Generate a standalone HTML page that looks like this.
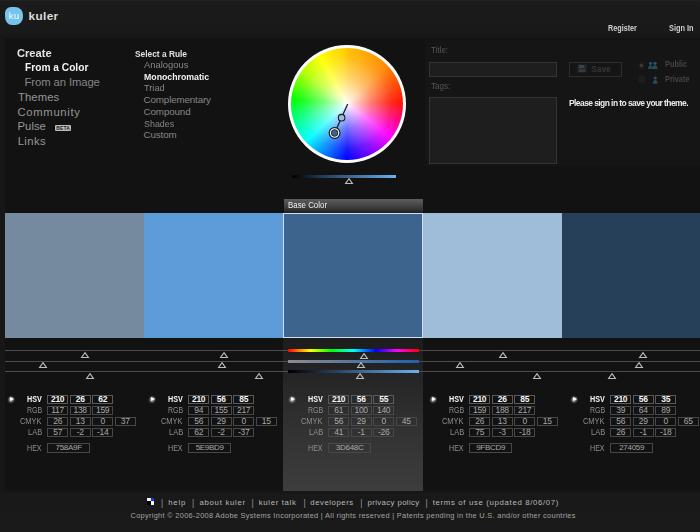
<!DOCTYPE html><html><head><meta charset='utf-8'><style>
html,body{margin:0;padding:0;}
body{width:700px;height:532px;overflow:hidden;position:relative;background:#121212;font-family:'Liberation Sans',sans-serif;}
.a{position:absolute;}
.t{position:absolute;white-space:nowrap;}
.box{position:absolute;border:1px solid #474747;box-sizing:border-box;height:9px;width:21px;text-align:center;font-size:8.5px;line-height:7px;color:#a8a8a8;letter-spacing:-0.3px;text-indent:0.3px;white-space:nowrap;}
.box.b{color:#f4f4f4;font-weight:700;border-color:#5a5a5a;}
.lbl{position:absolute;text-align:right;width:40px;font-size:8.5px;line-height:9px;color:#8c8c8c;white-space:nowrap;}
.lbl.b{color:#f4f4f4;font-weight:700;}
.tri{position:absolute;width:0;height:0;}
</style></head><body>

<div class='a' style='left:0;top:0;width:700px;height:38px;background:linear-gradient(#242424 0,#1b1b1b 2px,#191919 85%,#161616 100%)'></div>
<div class='a' style='left:0;top:38px;width:5px;height:453px;background:#171717'></div>
<div class='a' style='left:425px;top:40px;width:275px;height:126px;background:#151515'></div>
<div class='a' style='left:0;top:491px;width:700px;height:41px;background:linear-gradient(#161616,#191919 4px,#1a1a1a)'></div>
<div class='a' style='left:5px;top:7px;width:17.6px;height:18.2px;background:#76c4ec;border-radius:6px 8px 8px 7px / 6px 8px 8px 8px'></div>
<div class='a' style='left:55px;top:125px;width:15.5px;height:6px;background:#bdbdbd;border-radius:1px'></div>
<div class='t' style='left:56.3px;top:125.3px;font-size:5px;line-height:6px;font-weight:700;color:#222;letter-spacing:0.1px'>BETA</div>
<div class='a' style='left:288px;top:45px;width:118px;height:118px;border-radius:50%;background:#fff'></div>
<div class='a' style='left:291px;top:48px;width:112px;height:112px;border-radius:50%;background:conic-gradient(from 0deg,#ffc000 0deg,#ff8a00 45deg,#ff1000 88deg,#ff0080 108deg,#ff00ff 127deg,#8000ff 152deg,#0000ff 180deg,#0080ff 205deg,#00ffff 228deg,#00ff60 260deg,#00ff00 275deg,#aaff00 305deg,#ffff00 330deg,#ffc800 360deg)'></div>
<div class='a' style='left:291px;top:48px;width:112px;height:112px;border-radius:50%;background:radial-gradient(circle closest-side,rgba(255,255,255,1) 0%,rgba(255,255,255,0.82) 12%,rgba(255,255,255,0.42) 45%,rgba(255,255,255,0.1) 80%,rgba(255,255,255,0) 100%)'></div>
<svg class='a' style='left:0;top:0' width='700' height='200'>
<line x1='347.7' y1='104' x2='334.6' y2='133' stroke='#202020' stroke-width='1.3'/>
<circle cx='341.6' cy='117.7' r='3.3' fill='#9fbcd9' stroke='#1a1a1a' stroke-width='1.1'/>
<circle cx='334.6' cy='133' r='5.3' fill='#3d648c' stroke='#151515' stroke-width='1.3'/>
<circle cx='334.6' cy='133' r='4.1' fill='none' stroke='#f4ead8' stroke-width='1.4'/>
<circle cx='334.6' cy='133' r='3.2' fill='#3d648c' stroke='#151515' stroke-width='0.6'/>
</svg>
<div class='a' style='left:292px;top:175px;width:104px;height:3px;background:linear-gradient(90deg,#000 0%,#1d3550 25%,#3d6590 55%,#6cb0f0 100%)'></div>
<svg class='a' style='left:344.00px;top:177.00px' width='10' height='8'><path d='M5.00 1.6 L8.40 6.50 L1.6 6.50 Z' fill='none' stroke='#bdbdbd' stroke-width='1.1' stroke-linejoin='miter'/></svg>
<div class='a' style='left:429px;top:62px;width:128px;height:15px;box-sizing:border-box;border:1px solid #343434;background:#1e1e1e'></div>
<div class='a' style='left:429px;top:97px;width:128px;height:67px;box-sizing:border-box;border:1px solid #343434;background:#1e1e1e'></div>
<div class='a' style='left:569px;top:62px;width:53px;height:15px;box-sizing:border-box;border:1px solid #2c2c2c;'></div>
<svg class='a' style='left:577px;top:64px' width='10' height='9'><rect x='0.5' y='0.5' width='9' height='8' fill='#222a30'/><rect x='2' y='1' width='5' height='3' fill='#39434a'/><rect x='2' y='5.5' width='6' height='2.5' fill='#3a3a3a'/></svg>
<div class='a' style='left:637.5px;top:61.5px;width:7.5px;height:7.5px;border-radius:50%;background:#1d1d1d'></div>
<div class='a' style='left:640px;top:64px;width:2.5px;height:2.5px;border-radius:50%;background:#3c3c3c'></div>
<div class='a' style='left:637.5px;top:75px;width:8px;height:8px;border-radius:50%;background:#1d1d1d'></div>
<svg class='a' style='left:647px;top:61px' width='12' height='9'>
<circle cx='3.5' cy='2.3' r='1.6' fill='#235262'/><path d='M1 8 Q1 4.3 3.5 4.3 Q6 4.3 6 8 Z' fill='#1c4a5a'/>
<circle cx='8' cy='2.3' r='1.6' fill='#2c5564'/><path d='M5.6 8 Q5.6 4.3 8 4.3 Q10.5 4.3 10.5 8 Z' fill='#254e5c'/>
</svg>
<svg class='a' style='left:652px;top:76px' width='7' height='9'>
<circle cx='3.2' cy='2' r='1.6' fill='#2e5262'/><path d='M0.8 7.8 Q0.8 4 3.2 4 Q5.6 4 5.6 7.8 Z' fill='#284a5a'/>
</svg>
<div class='a' style='left:5px;top:213px;width:139px;height:125px;background:#758A9F'></div>
<div class='a' style='left:144px;top:213px;width:139px;height:125px;background:#5E9BD9'></div>
<div class='a' style='left:283px;top:213px;width:140px;height:125px;background:#3D648C'></div>
<div class='a' style='left:423px;top:213px;width:139px;height:125px;background:#9FBCD9'></div>
<div class='a' style='left:562px;top:213px;width:138px;height:125px;background:#274059'></div>
<div class='a' style='left:283px;top:213px;width:140px;height:125px;box-sizing:border-box;border:1px solid #d0e0f0'></div>
<div class='a' style='left:284px;top:199px;width:139px;height:14px;background:linear-gradient(#5e5e5e,#3a3a3a 65%,#1e1e1e 100%)'></div>
<div class='a' style='left:283px;top:338px;width:140px;height:153px;background:linear-gradient(#1c1c1c 0%,#252525 25%,#323232 60%,#3d3d3d 100%)'></div>
<div class='a' style='left:5px;top:350px;width:283px;height:1px;background:#4c4c4c'></div>
<div class='a' style='left:419px;top:350px;width:281px;height:1px;background:#4c4c4c'></div>
<div class='a' style='left:5px;top:361px;width:283px;height:1px;background:#4c4c4c'></div>
<div class='a' style='left:419px;top:361px;width:281px;height:1px;background:#4c4c4c'></div>
<div class='a' style='left:5px;top:371px;width:283px;height:1px;background:#4c4c4c'></div>
<div class='a' style='left:419px;top:371px;width:281px;height:1px;background:#4c4c4c'></div>
<div class='a' style='left:288px;top:349px;width:131px;height:3px;background:linear-gradient(90deg,#f00 0%,#ff0 17%,#0f0 33%,#0ff 50%,#00f 67%,#f0f 83%,#f00 100%)'></div>
<div class='a' style='left:288px;top:360px;width:131px;height:3px;background:linear-gradient(90deg,#8c8c8c 0%,#2060b0 100%)'></div>
<div class='a' style='left:288px;top:370px;width:131px;height:3px;background:linear-gradient(90deg,#000 0%,#3d648c 55%,#6cb0f0 100%)'></div>
<svg class='a' style='left:80.40px;top:351.00px' width='10' height='8'><path d='M5.00 1.6 L8.40 6.50 L1.6 6.50 Z' fill='none' stroke='#bdbdbd' stroke-width='1.1' stroke-linejoin='miter'/></svg>
<svg class='a' style='left:219.30px;top:351.00px' width='10' height='8'><path d='M5.00 1.6 L8.40 6.50 L1.6 6.50 Z' fill='none' stroke='#bdbdbd' stroke-width='1.1' stroke-linejoin='miter'/></svg>
<svg class='a' style='left:498.20px;top:351.00px' width='10' height='8'><path d='M5.00 1.6 L8.40 6.50 L1.6 6.50 Z' fill='none' stroke='#bdbdbd' stroke-width='1.1' stroke-linejoin='miter'/></svg>
<svg class='a' style='left:637.80px;top:351.00px' width='10' height='8'><path d='M5.00 1.6 L8.40 6.50 L1.6 6.50 Z' fill='none' stroke='#bdbdbd' stroke-width='1.1' stroke-linejoin='miter'/></svg>
<svg class='a' style='left:358.90px;top:351.60px' width='10' height='8'><path d='M5.00 1.6 L8.40 6.50 L1.6 6.50 Z' fill='none' stroke='#bdbdbd' stroke-width='1.1' stroke-linejoin='miter'/></svg>
<svg class='a' style='left:38.00px;top:361.40px' width='10' height='8'><path d='M5.00 1.6 L8.40 6.50 L1.6 6.50 Z' fill='none' stroke='#bdbdbd' stroke-width='1.1' stroke-linejoin='miter'/></svg>
<svg class='a' style='left:217.00px;top:361.40px' width='10' height='8'><path d='M5.00 1.6 L8.40 6.50 L1.6 6.50 Z' fill='none' stroke='#bdbdbd' stroke-width='1.1' stroke-linejoin='miter'/></svg>
<svg class='a' style='left:455.00px;top:361.40px' width='10' height='8'><path d='M5.00 1.6 L8.40 6.50 L1.6 6.50 Z' fill='none' stroke='#bdbdbd' stroke-width='1.1' stroke-linejoin='miter'/></svg>
<svg class='a' style='left:634.20px;top:361.40px' width='10' height='8'><path d='M5.00 1.6 L8.40 6.50 L1.6 6.50 Z' fill='none' stroke='#bdbdbd' stroke-width='1.1' stroke-linejoin='miter'/></svg>
<svg class='a' style='left:356.00px;top:361.40px' width='10' height='8'><path d='M5.00 1.6 L8.40 6.50 L1.6 6.50 Z' fill='none' stroke='#bdbdbd' stroke-width='1.1' stroke-linejoin='miter'/></svg>
<svg class='a' style='left:85.20px;top:371.90px' width='10' height='8'><path d='M5.00 1.6 L8.40 6.50 L1.6 6.50 Z' fill='none' stroke='#bdbdbd' stroke-width='1.1' stroke-linejoin='miter'/></svg>
<svg class='a' style='left:254.40px;top:371.90px' width='10' height='8'><path d='M5.00 1.6 L8.40 6.50 L1.6 6.50 Z' fill='none' stroke='#bdbdbd' stroke-width='1.1' stroke-linejoin='miter'/></svg>
<svg class='a' style='left:532.20px;top:371.90px' width='10' height='8'><path d='M5.00 1.6 L8.40 6.50 L1.6 6.50 Z' fill='none' stroke='#bdbdbd' stroke-width='1.1' stroke-linejoin='miter'/></svg>
<svg class='a' style='left:607.00px;top:371.90px' width='10' height='8'><path d='M5.00 1.6 L8.40 6.50 L1.6 6.50 Z' fill='none' stroke='#bdbdbd' stroke-width='1.1' stroke-linejoin='miter'/></svg>
<svg class='a' style='left:354.70px;top:371.50px' width='10' height='8'><path d='M5.00 1.6 L8.40 6.50 L1.6 6.50 Z' fill='none' stroke='#bdbdbd' stroke-width='1.1' stroke-linejoin='miter'/></svg>
<div class='a' style='left:7px;top:395.5px;width:8px;height:8px;border-radius:50%;background:radial-gradient(circle closest-side,rgba(255,255,255,0.5) 0%,rgba(255,255,255,0.2) 60%,rgba(255,255,255,0) 100%)'></div>
<div class='a' style='left:9.5px;top:397px;width:0;height:0;border-left:4.5px solid #fff;border-top:2.8px solid transparent;border-bottom:2.8px solid transparent;filter:drop-shadow(0 0 1px #fff)'></div>
<div class='box b' style='left:47.0px;top:395px'>210</div>
<div class='box b' style='left:69.5px;top:395px'>26</div>
<div class='box b' style='left:92.0px;top:395px'>62</div>
<div class='box' style='left:47.0px;top:406px'>117</div>
<div class='box' style='left:69.5px;top:406px'>138</div>
<div class='box' style='left:92.0px;top:406px'>159</div>
<div class='box' style='left:47.0px;top:417px'>26</div>
<div class='box' style='left:69.5px;top:417px'>13</div>
<div class='box' style='left:92.0px;top:417px'>0</div>
<div class='box' style='left:114.5px;top:417px'>37</div>
<div class='box' style='left:47.0px;top:428px'>57</div>
<div class='box' style='left:69.5px;top:428px'>-2</div>
<div class='box' style='left:92.0px;top:428px'>-14</div>
<div class='box' style='left:47px;top:443px;width:43px;height:10px;line-height:8px;font-size:8px'>758A9F</div>
<div class='a' style='left:148px;top:395.5px;width:8px;height:8px;border-radius:50%;background:radial-gradient(circle closest-side,rgba(255,255,255,0.5) 0%,rgba(255,255,255,0.2) 60%,rgba(255,255,255,0) 100%)'></div>
<div class='a' style='left:150.5px;top:397px;width:0;height:0;border-left:4.5px solid #fff;border-top:2.8px solid transparent;border-bottom:2.8px solid transparent;filter:drop-shadow(0 0 1px #fff)'></div>
<div class='box b' style='left:188.0px;top:395px'>210</div>
<div class='box b' style='left:210.5px;top:395px'>56</div>
<div class='box b' style='left:233.0px;top:395px'>85</div>
<div class='box' style='left:188.0px;top:406px'>94</div>
<div class='box' style='left:210.5px;top:406px'>155</div>
<div class='box' style='left:233.0px;top:406px'>217</div>
<div class='box' style='left:188.0px;top:417px'>56</div>
<div class='box' style='left:210.5px;top:417px'>29</div>
<div class='box' style='left:233.0px;top:417px'>0</div>
<div class='box' style='left:255.5px;top:417px'>15</div>
<div class='box' style='left:188.0px;top:428px'>62</div>
<div class='box' style='left:210.5px;top:428px'>-2</div>
<div class='box' style='left:233.0px;top:428px'>-37</div>
<div class='box' style='left:188px;top:443px;width:43px;height:10px;line-height:8px;font-size:8px'>5E9BD9</div>
<div class='a' style='left:288px;top:395.5px;width:8px;height:8px;border-radius:50%;background:radial-gradient(circle closest-side,rgba(255,255,255,0.5) 0%,rgba(255,255,255,0.2) 60%,rgba(255,255,255,0) 100%)'></div>
<div class='a' style='left:290.5px;top:397px;width:0;height:0;border-left:4.5px solid #fff;border-top:2.8px solid transparent;border-bottom:2.8px solid transparent;filter:drop-shadow(0 0 1px #fff)'></div>
<div class='box b' style='left:328.0px;top:395px'>210</div>
<div class='box b' style='left:350.5px;top:395px'>56</div>
<div class='box b' style='left:373.0px;top:395px'>55</div>
<div class='box' style='left:328.0px;top:406px'>61</div>
<div class='box' style='left:350.5px;top:406px'>100</div>
<div class='box' style='left:373.0px;top:406px'>140</div>
<div class='box' style='left:328.0px;top:417px'>56</div>
<div class='box' style='left:350.5px;top:417px'>29</div>
<div class='box' style='left:373.0px;top:417px'>0</div>
<div class='box' style='left:395.5px;top:417px'>45</div>
<div class='box' style='left:328.0px;top:428px'>41</div>
<div class='box' style='left:350.5px;top:428px'>-1</div>
<div class='box' style='left:373.0px;top:428px'>-26</div>
<div class='box' style='left:328px;top:443px;width:43px;height:10px;line-height:8px;font-size:8px'>3D648C</div>
<div class='a' style='left:429px;top:395.5px;width:8px;height:8px;border-radius:50%;background:radial-gradient(circle closest-side,rgba(255,255,255,0.5) 0%,rgba(255,255,255,0.2) 60%,rgba(255,255,255,0) 100%)'></div>
<div class='a' style='left:431.5px;top:397px;width:0;height:0;border-left:4.5px solid #fff;border-top:2.8px solid transparent;border-bottom:2.8px solid transparent;filter:drop-shadow(0 0 1px #fff)'></div>
<div class='box b' style='left:469.0px;top:395px'>210</div>
<div class='box b' style='left:491.5px;top:395px'>26</div>
<div class='box b' style='left:514.0px;top:395px'>85</div>
<div class='box' style='left:469.0px;top:406px'>159</div>
<div class='box' style='left:491.5px;top:406px'>188</div>
<div class='box' style='left:514.0px;top:406px'>217</div>
<div class='box' style='left:469.0px;top:417px'>26</div>
<div class='box' style='left:491.5px;top:417px'>13</div>
<div class='box' style='left:514.0px;top:417px'>0</div>
<div class='box' style='left:536.5px;top:417px'>15</div>
<div class='box' style='left:469.0px;top:428px'>75</div>
<div class='box' style='left:491.5px;top:428px'>-3</div>
<div class='box' style='left:514.0px;top:428px'>-18</div>
<div class='box' style='left:469px;top:443px;width:43px;height:10px;line-height:8px;font-size:8px'>9FBCD9</div>
<div class='a' style='left:570px;top:395.5px;width:8px;height:8px;border-radius:50%;background:radial-gradient(circle closest-side,rgba(255,255,255,0.5) 0%,rgba(255,255,255,0.2) 60%,rgba(255,255,255,0) 100%)'></div>
<div class='a' style='left:572.5px;top:397px;width:0;height:0;border-left:4.5px solid #fff;border-top:2.8px solid transparent;border-bottom:2.8px solid transparent;filter:drop-shadow(0 0 1px #fff)'></div>
<div class='box b' style='left:610.0px;top:395px'>210</div>
<div class='box b' style='left:632.5px;top:395px'>56</div>
<div class='box b' style='left:655.0px;top:395px'>35</div>
<div class='box' style='left:610.0px;top:406px'>39</div>
<div class='box' style='left:632.5px;top:406px'>64</div>
<div class='box' style='left:655.0px;top:406px'>89</div>
<div class='box' style='left:610.0px;top:417px'>56</div>
<div class='box' style='left:632.5px;top:417px'>29</div>
<div class='box' style='left:655.0px;top:417px'>0</div>
<div class='box' style='left:677.5px;top:417px'>65</div>
<div class='box' style='left:610.0px;top:428px'>26</div>
<div class='box' style='left:632.5px;top:428px'>-1</div>
<div class='box' style='left:655.0px;top:428px'>-18</div>
<div class='box' style='left:610px;top:443px;width:43px;height:10px;line-height:8px;font-size:8px'>274059</div>
<div class='a' style='left:147px;top:497.5px;width:7px;height:7.5px;background:#f4f4f4'></div>
<div class='a' style='left:150.5px;top:497.5px;width:3.5px;height:3.5px;background:#1030f0'></div>
<div class='a' style='left:147px;top:501px;width:3.5px;height:4px;background:#050505'></div>
<div class='t' style='left:28.49px;top:11px;font-size:11.8px;line-height:11.8px;font-weight:700;color:#dcdcdc;letter-spacing:0.378px;'>kuler</div>
<div class='t' style='left:608.37px;top:24px;font-size:9px;line-height:9px;font-weight:700;color:#d0d0d0;letter-spacing:0.000px;transform:scaleX(0.8019);transform-origin:0 0;'>Register</div>
<div class='t' style='left:668.56px;top:24px;font-size:9px;line-height:9px;font-weight:700;color:#d0d0d0;letter-spacing:0.000px;transform:scaleX(0.8160);transform-origin:0 0;'>Sign In</div>
<div class='t' style='left:17.33px;top:48px;font-size:11.5px;line-height:11.5px;font-weight:700;color:#e4e4e4;letter-spacing:0.000px;transform:scaleX(0.9656);transform-origin:0 0;'>Create</div>
<div class='t' style='left:24.79px;top:62px;font-size:11.3px;line-height:11.3px;font-weight:700;color:#f2f2f2;letter-spacing:0.000px;transform:scaleX(0.9013);transform-origin:0 0;'>From a Color</div>
<div class='t' style='left:24.52px;top:77px;font-size:11.3px;line-height:11.3px;font-weight:400;color:#868686;letter-spacing:-0.104px;'>From an Image</div>
<div class='t' style='left:17.92px;top:92px;font-size:11.3px;line-height:11.3px;font-weight:400;color:#969696;letter-spacing:0.109px;'>Themes</div>
<div class='t' style='left:17.52px;top:107px;font-size:11.3px;line-height:11.3px;font-weight:400;color:#969696;letter-spacing:0.654px;'>Community</div>
<div class='t' style='left:17.52px;top:121px;font-size:11.3px;line-height:11.3px;font-weight:400;color:#969696;letter-spacing:0.023px;'>Pulse</div>
<div class='t' style='left:17.72px;top:136px;font-size:11.3px;line-height:11.3px;font-weight:400;color:#969696;letter-spacing:0.370px;'>Links</div>
<div class='t' style='left:135.30px;top:49px;font-size:9.8px;line-height:9.8px;font-weight:700;color:#e0e0e0;letter-spacing:0.000px;transform:scaleX(0.8521);transform-origin:0 0;'>Select a Rule</div>
<div class='t' style='left:143.64px;top:60px;font-size:9.8px;line-height:9.8px;font-weight:400;color:#868686;letter-spacing:0.000px;transform:scaleX(0.9603);transform-origin:0 0;'>Analogous</div>
<div class='t' style='left:143.67px;top:72px;font-size:9.8px;line-height:9.8px;font-weight:700;color:#f2f2f2;letter-spacing:0.000px;transform:scaleX(0.8936);transform-origin:0 0;'>Monochromatic</div>
<div class='t' style='left:143.65px;top:83px;font-size:9.8px;line-height:9.8px;font-weight:400;color:#868686;letter-spacing:0.000px;transform:scaleX(0.9412);transform-origin:0 0;'>Triad</div>
<div class='t' style='left:143.61px;top:95px;font-size:9.8px;line-height:9.8px;font-weight:400;color:#868686;letter-spacing:-0.148px;'>Complementary</div>
<div class='t' style='left:143.61px;top:107px;font-size:9.8px;line-height:9.8px;font-weight:400;color:#868686;letter-spacing:-0.137px;'>Compound</div>
<div class='t' style='left:143.67px;top:119px;font-size:9.8px;line-height:9.8px;font-weight:400;color:#868686;letter-spacing:0.000px;transform:scaleX(0.9080);transform-origin:0 0;'>Shades</div>
<div class='t' style='left:143.61px;top:130px;font-size:9.8px;line-height:9.8px;font-weight:400;color:#868686;letter-spacing:-0.138px;'>Custom</div>
<div class='t' style='left:430.72px;top:46px;font-size:9px;line-height:9px;font-weight:400;color:#555;letter-spacing:0.000px;transform:scaleX(0.8909);transform-origin:0 0;'>Title:</div>
<div class='t' style='left:430.72px;top:82px;font-size:9px;line-height:9px;font-weight:400;color:#555;letter-spacing:0.000px;transform:scaleX(0.8961);transform-origin:0 0;'>Tags:</div>
<div class='t' style='left:591.21px;top:66px;font-size:8.2px;line-height:8.2px;font-weight:700;color:#363636;letter-spacing:0.086px;'>Save</div>
<div class='t' style='left:664.56px;top:60px;font-size:9px;line-height:9px;font-weight:700;color:#444;letter-spacing:0.000px;transform:scaleX(0.8173);transform-origin:0 0;'>Public</div>
<div class='t' style='left:665.16px;top:75px;font-size:9px;line-height:9px;font-weight:700;color:#444;letter-spacing:0.000px;transform:scaleX(0.8152);transform-origin:0 0;'>Private</div>
<div class='t' style='left:568.69px;top:98px;font-size:9.6px;line-height:9.6px;font-weight:700;color:#ececec;letter-spacing:-0.634px;transform:scaleX(0.8800);transform-origin:0 0;'>Please sign in to save your theme.</div>
<div class='t' style='left:288.13px;top:201px;font-size:8.5px;line-height:8.5px;font-weight:400;color:#f0f0f0;letter-spacing:0.000px;transform:scaleX(0.9277);transform-origin:0 0;'>Base Color</div>
<div class='t' style='left:168.13px;top:499px;font-size:7.8px;line-height:7.8px;font-weight:400;color:#b8b8b8;letter-spacing:0.862px;'>help</div>
<div class='t' style='left:199.43px;top:499px;font-size:7.8px;line-height:7.8px;font-weight:400;color:#b8b8b8;letter-spacing:0.716px;'>about kuler</div>
<div class='t' style='left:258.83px;top:499px;font-size:7.8px;line-height:7.8px;font-weight:400;color:#b8b8b8;letter-spacing:0.648px;'>kuler talk</div>
<div class='t' style='left:310.33px;top:499px;font-size:7.8px;line-height:7.8px;font-weight:400;color:#b8b8b8;letter-spacing:0.531px;'>developers</div>
<div class='t' style='left:367.53px;top:499px;font-size:7.8px;line-height:7.8px;font-weight:400;color:#b8b8b8;letter-spacing:0.380px;'>privacy policy</div>
<div class='t' style='left:432.73px;top:499px;font-size:7.8px;line-height:7.8px;font-weight:400;color:#b8b8b8;letter-spacing:0.659px;'>terms of use (updated 8/06/07)</div>
<div class='t' style='left:161.01px;top:500px;font-size:8.2px;line-height:8.2px;font-weight:400;color:#9a9a9a;letter-spacing:0.000px;'>|</div>
<div class='t' style='left:192.11px;top:500px;font-size:8.2px;line-height:8.2px;font-weight:400;color:#9a9a9a;letter-spacing:0.000px;'>|</div>
<div class='t' style='left:251.51px;top:500px;font-size:8.2px;line-height:8.2px;font-weight:400;color:#9a9a9a;letter-spacing:0.000px;'>|</div>
<div class='t' style='left:303.51px;top:500px;font-size:8.2px;line-height:8.2px;font-weight:400;color:#9a9a9a;letter-spacing:0.000px;'>|</div>
<div class='t' style='left:360.31px;top:500px;font-size:8.2px;line-height:8.2px;font-weight:400;color:#9a9a9a;letter-spacing:0.000px;'>|</div>
<div class='t' style='left:425.51px;top:500px;font-size:8.2px;line-height:8.2px;font-weight:400;color:#9a9a9a;letter-spacing:0.000px;'>|</div>
<div class='t' style='left:130.56px;top:512px;font-size:7.4px;line-height:7.4px;font-weight:400;color:#a4a4a4;letter-spacing:0.301px;'>Copyright &copy; 2006-2008 Adobe Systems Incorporated | All rights reserved | Patents pending in the U.S. and/or other countries</div>
<div class='t' style='left:8.42px;top:11px;font-size:9.6px;line-height:9.6px;font-weight:400;color:#f4fbff;letter-spacing:0.611px;'>ku</div>
<div class='t' style='left:26.97px;top:395px;font-size:8.5px;line-height:8.5px;font-weight:700;color:#f4f4f4;letter-spacing:0.000px;transform:scaleX(0.8476);transform-origin:0 0;'>HSV</div>
<div class='t' style='left:26.58px;top:406px;font-size:8.5px;line-height:8.5px;font-weight:400;color:#8e8e8e;letter-spacing:0.000px;transform:scaleX(0.8262);transform-origin:0 0;'>RGB</div>
<div class='t' style='left:20.36px;top:417px;font-size:8.5px;line-height:8.5px;font-weight:400;color:#8e8e8e;letter-spacing:0.000px;transform:scaleX(0.8721);transform-origin:0 0;'>CMYK</div>
<div class='t' style='left:27.55px;top:428px;font-size:8.5px;line-height:8.5px;font-weight:400;color:#8e8e8e;letter-spacing:0.000px;transform:scaleX(0.8844);transform-origin:0 0;'>LAB</div>
<div class='t' style='left:27.17px;top:444px;font-size:8.5px;line-height:8.5px;font-weight:400;color:#8e8e8e;letter-spacing:0.000px;transform:scaleX(0.8362);transform-origin:0 0;'>HEX</div>
<div class='t' style='left:167.97px;top:395px;font-size:8.5px;line-height:8.5px;font-weight:700;color:#f4f4f4;letter-spacing:0.000px;transform:scaleX(0.8476);transform-origin:0 0;'>HSV</div>
<div class='t' style='left:167.58px;top:406px;font-size:8.5px;line-height:8.5px;font-weight:400;color:#8e8e8e;letter-spacing:0.000px;transform:scaleX(0.8262);transform-origin:0 0;'>RGB</div>
<div class='t' style='left:161.36px;top:417px;font-size:8.5px;line-height:8.5px;font-weight:400;color:#8e8e8e;letter-spacing:0.000px;transform:scaleX(0.8721);transform-origin:0 0;'>CMYK</div>
<div class='t' style='left:168.55px;top:428px;font-size:8.5px;line-height:8.5px;font-weight:400;color:#8e8e8e;letter-spacing:0.000px;transform:scaleX(0.8844);transform-origin:0 0;'>LAB</div>
<div class='t' style='left:168.17px;top:444px;font-size:8.5px;line-height:8.5px;font-weight:400;color:#8e8e8e;letter-spacing:0.000px;transform:scaleX(0.8362);transform-origin:0 0;'>HEX</div>
<div class='t' style='left:307.97px;top:395px;font-size:8.5px;line-height:8.5px;font-weight:700;color:#f4f4f4;letter-spacing:0.000px;transform:scaleX(0.8476);transform-origin:0 0;'>HSV</div>
<div class='t' style='left:307.58px;top:406px;font-size:8.5px;line-height:8.5px;font-weight:400;color:#8e8e8e;letter-spacing:0.000px;transform:scaleX(0.8262);transform-origin:0 0;'>RGB</div>
<div class='t' style='left:301.36px;top:417px;font-size:8.5px;line-height:8.5px;font-weight:400;color:#8e8e8e;letter-spacing:0.000px;transform:scaleX(0.8721);transform-origin:0 0;'>CMYK</div>
<div class='t' style='left:308.55px;top:428px;font-size:8.5px;line-height:8.5px;font-weight:400;color:#8e8e8e;letter-spacing:0.000px;transform:scaleX(0.8844);transform-origin:0 0;'>LAB</div>
<div class='t' style='left:308.17px;top:444px;font-size:8.5px;line-height:8.5px;font-weight:400;color:#8e8e8e;letter-spacing:0.000px;transform:scaleX(0.8362);transform-origin:0 0;'>HEX</div>
<div class='t' style='left:448.97px;top:395px;font-size:8.5px;line-height:8.5px;font-weight:700;color:#f4f4f4;letter-spacing:0.000px;transform:scaleX(0.8476);transform-origin:0 0;'>HSV</div>
<div class='t' style='left:448.58px;top:406px;font-size:8.5px;line-height:8.5px;font-weight:400;color:#8e8e8e;letter-spacing:0.000px;transform:scaleX(0.8262);transform-origin:0 0;'>RGB</div>
<div class='t' style='left:442.36px;top:417px;font-size:8.5px;line-height:8.5px;font-weight:400;color:#8e8e8e;letter-spacing:0.000px;transform:scaleX(0.8721);transform-origin:0 0;'>CMYK</div>
<div class='t' style='left:449.55px;top:428px;font-size:8.5px;line-height:8.5px;font-weight:400;color:#8e8e8e;letter-spacing:0.000px;transform:scaleX(0.8844);transform-origin:0 0;'>LAB</div>
<div class='t' style='left:449.17px;top:444px;font-size:8.5px;line-height:8.5px;font-weight:400;color:#8e8e8e;letter-spacing:0.000px;transform:scaleX(0.8362);transform-origin:0 0;'>HEX</div>
<div class='t' style='left:589.97px;top:395px;font-size:8.5px;line-height:8.5px;font-weight:700;color:#f4f4f4;letter-spacing:0.000px;transform:scaleX(0.8476);transform-origin:0 0;'>HSV</div>
<div class='t' style='left:589.58px;top:406px;font-size:8.5px;line-height:8.5px;font-weight:400;color:#8e8e8e;letter-spacing:0.000px;transform:scaleX(0.8262);transform-origin:0 0;'>RGB</div>
<div class='t' style='left:583.36px;top:417px;font-size:8.5px;line-height:8.5px;font-weight:400;color:#8e8e8e;letter-spacing:0.000px;transform:scaleX(0.8721);transform-origin:0 0;'>CMYK</div>
<div class='t' style='left:590.55px;top:428px;font-size:8.5px;line-height:8.5px;font-weight:400;color:#8e8e8e;letter-spacing:0.000px;transform:scaleX(0.8844);transform-origin:0 0;'>LAB</div>
<div class='t' style='left:590.17px;top:444px;font-size:8.5px;line-height:8.5px;font-weight:400;color:#8e8e8e;letter-spacing:0.000px;transform:scaleX(0.8362);transform-origin:0 0;'>HEX</div>
</body></html>
